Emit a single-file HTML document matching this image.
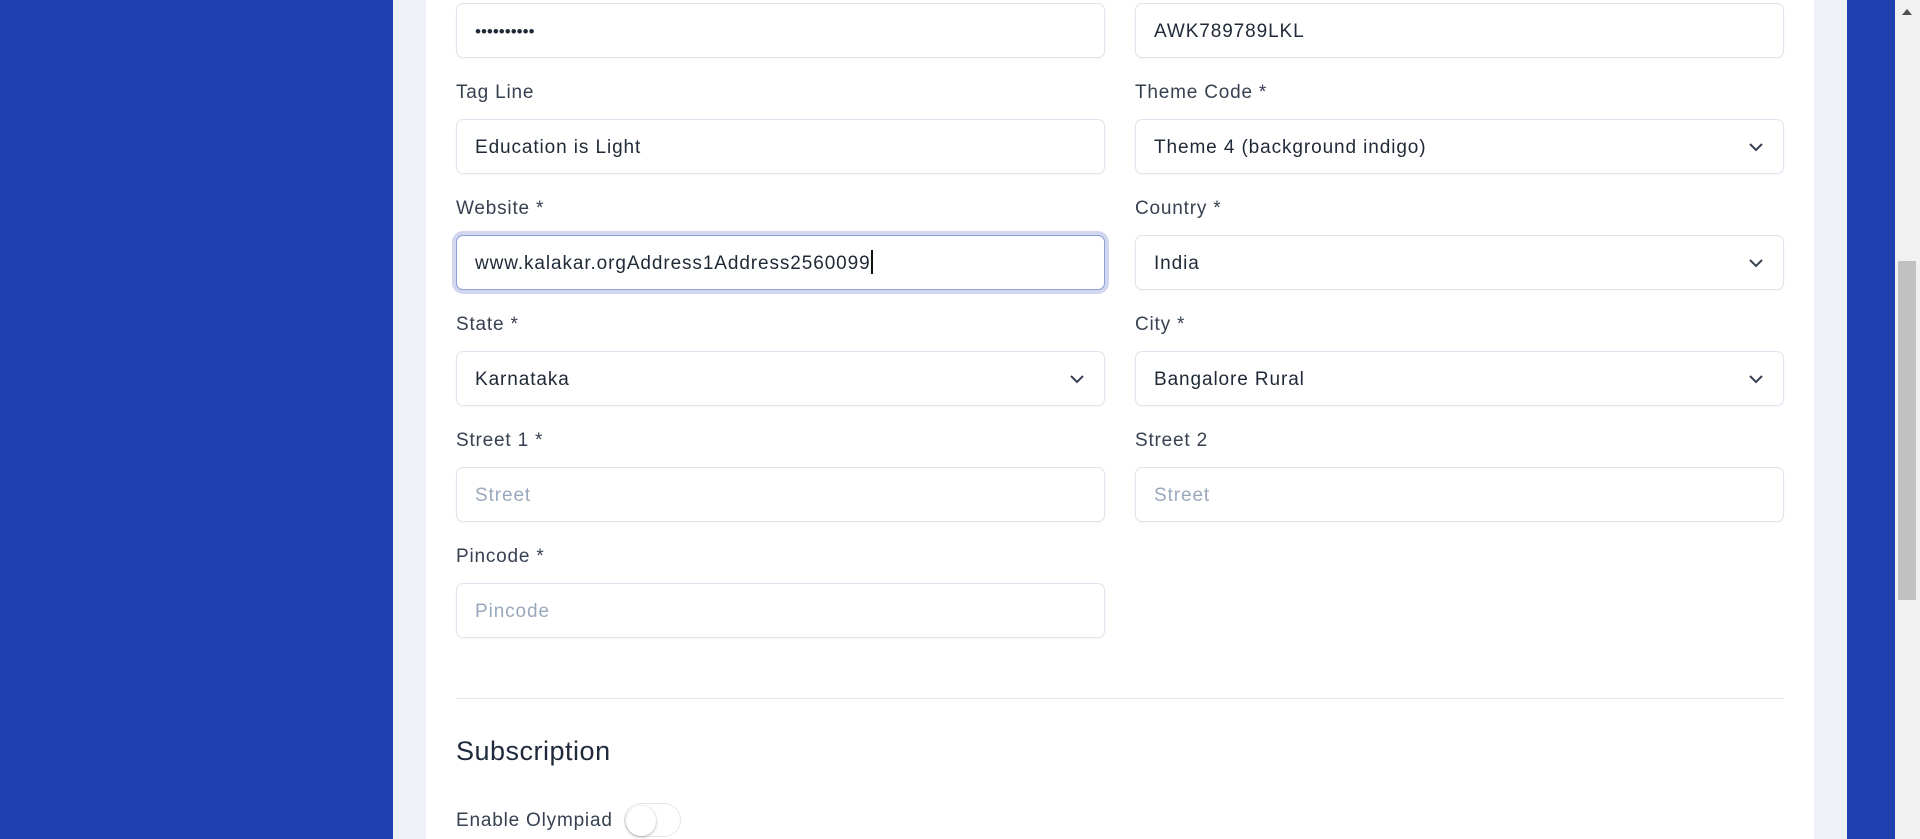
<!DOCTYPE html>
<html><head><meta charset="utf-8"><style>
*{box-sizing:border-box;margin:0;padding:0}
body{width:1920px;height:839px;overflow:hidden;background:#1e40af;font-family:"Liberation Sans",sans-serif;position:relative;color:#1f2937}
.gray{position:absolute;left:393px;top:0;width:1454px;height:839px;background:#eef1f7}
.card{position:absolute;left:426px;top:0;width:1388px;height:839px;background:#fff}
.lbl{position:absolute;font-size:19px;color:#374151;letter-spacing:0.8px}
.in{position:absolute;height:55px;width:649px;border:1px solid #dfe4ee;border-radius:7px;background:#fff;font-size:19px;line-height:56px;padding-left:18px;color:#1f2937;letter-spacing:0.9px;box-shadow:0 1px 2px rgba(0,0,0,0.04)}
.ph{color:#9aa8bd}
.chev{position:absolute;right:18px;top:20px}
.sb{position:absolute;left:1895px;top:0;width:25px;height:839px;background:#f1f1f1}
</style></head><body>
<div class="gray"></div>
<div class="card"></div>

<div class="in" style="left:456px;top:3px;font-size:17px;letter-spacing:0">••••••••••</div>
<div class="in" style="left:1135px;top:3px">AWK789789LKL</div>

<div class="lbl" style="left:456px;top:82px">Tag Line</div>
<div class="lbl" style="left:1135px;top:82px">Theme Code *</div>
<div class="in" style="left:456px;top:119px">Education is Light</div>
<div class="in" style="left:1135px;top:119px">Theme 4 (background indigo)<svg class="chev" width="18" height="14" viewBox="0 0 18 14"><path d="M3 4l6 6 6-6" fill="none" stroke="#374151" stroke-width="2"/></svg></div>

<div class="lbl" style="left:456px;top:198px">Website *</div>
<div class="lbl" style="left:1135px;top:198px">Country *</div>
<div class="in" style="left:456px;top:235px;border-color:#8d9fd6;box-shadow:0 0 0 4px #d0d7ee">www.kalakar.orgAddress1Address2560099<span style="display:inline-block;width:2px;height:24px;background:#111;vertical-align:middle;margin-top:-4px"></span></div>
<div class="in" style="left:1135px;top:235px">India<svg class="chev" width="18" height="14" viewBox="0 0 18 14"><path d="M3 4l6 6 6-6" fill="none" stroke="#374151" stroke-width="2"/></svg></div>

<div class="lbl" style="left:456px;top:314px">State *</div>
<div class="lbl" style="left:1135px;top:314px">City *</div>
<div class="in" style="left:456px;top:351px">Karnataka<svg class="chev" width="18" height="14" viewBox="0 0 18 14"><path d="M3 4l6 6 6-6" fill="none" stroke="#374151" stroke-width="2"/></svg></div>
<div class="in" style="left:1135px;top:351px">Bangalore Rural<svg class="chev" width="18" height="14" viewBox="0 0 18 14"><path d="M3 4l6 6 6-6" fill="none" stroke="#374151" stroke-width="2"/></svg></div>

<div class="lbl" style="left:456px;top:430px">Street 1 *</div>
<div class="lbl" style="left:1135px;top:430px">Street 2</div>
<div class="in ph" style="left:456px;top:467px">Street</div>
<div class="in ph" style="left:1135px;top:467px">Street</div>

<div class="lbl" style="left:456px;top:546px">Pincode *</div>
<div class="in ph" style="left:456px;top:583px">Pincode</div>

<div style="position:absolute;left:456px;top:698px;width:1328px;height:1px;background:#e5e7eb"></div>
<div style="position:absolute;left:456px;top:736px;font-size:27px;color:#1e293b;letter-spacing:0.5px">Subscription</div>
<div class="lbl" style="left:456px;top:810px">Enable Olympiad</div>
<div style="position:absolute;left:624px;top:803px;width:57px;height:34px;border:1px solid #e2e6ee;border-radius:17px;background:#fff"></div>
<div style="position:absolute;left:626px;top:806px;width:30px;height:30px;border-radius:50%;background:#fff;box-shadow:0 1px 3px rgba(0,0,0,0.3)"></div>

<div class="sb"><div style="position:absolute;left:7px;top:9px;width:0;height:0;border-left:5px solid transparent;border-right:5px solid transparent;border-bottom:6px solid #505050"></div>
<div style="position:absolute;left:3px;top:261px;width:18px;height:339px;background:#c1c1c1"></div></div>
</body></html>
